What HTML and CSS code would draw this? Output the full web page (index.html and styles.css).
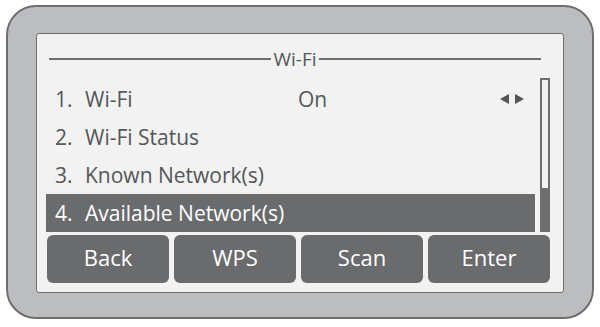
FILE: index.html
```html
<!DOCTYPE html>
<html lang="en">
<head>
    <meta charset="UTF-8">
    <title>Wi-Fi Menu</title>
    <link rel="stylesheet" href="styles.css">
</head>
<body>
    <div class="device">
        <div class="screen">
            <div class="title"><span>Wi-Fi</span></div>

            <div class="menu-body">
                <ul class="menu">
                    <li>
                        <span class="num">1.</span>
                        <span class="label">Wi-Fi</span>
                        <span class="value">On</span>
                        <svg class="arrows" width="24" height="12" viewBox="0 0 24 12">
                            <polygon points="0,6 9,1 9,11" />
                            <polygon points="15,1 24,6 15,11" />
                        </svg>
                    </li>
                    <li><span class="num">2.</span><span class="label">Wi-Fi Status</span></li>
                    <li><span class="num">3.</span><span class="label">Known Network(s)</span></li>
                    <li class="selected"><span class="num">4.</span><span class="label">Available Network(s)</span></li>
                </ul>
                <div class="scrollbar"><div class="scroll-fill"></div></div>
            </div>

            <div class="buttons">
                <button>Back</button>
                <button>WPS</button>
                <button>Scan</button>
                <button>Enter</button>
            </div>
        </div>
    </div>
</body>
</html>
```

FILE: styles.css
```css
body {
    margin: 0;
    background: #ffffff;
    font-family: "Open Sans", "Noto Sans", sans-serif;
}
.device {
    box-sizing: border-box;
    width: 588px;
    height: 314px;
    margin: 5px 0 0 6px;
    padding: 26px 0 0 28px;
    background: #bcbdbf;
    border: 2px solid #6d6e70;
    border-radius: 30px;
}
.screen {
    box-sizing: border-box;
    width: 528px;
    height: 260px;
    background: #f2f2f2;
    border: 1px solid #6d6e70;
    border-radius: 3px;
    display: flex;
    flex-direction: column;
}
.title {
    display: flex;
    align-items: center;
    height: 20px;
    margin: 15px 0 9px 12px;
    width: 492px;
    color: #555658;
    font-size: 19px;
}
.title::before, .title::after {
    content: "";
    flex: 1;
    height: 2px;
    background: #6d6e70;
}
.title span {
    padding: 0 2px;
}
.menu-body {
    display: flex;
    gap: 5px;
    margin-left: 9px;
    height: 154px;
}
.menu {
    list-style: none;
    margin: 0;
    padding: 2px 0 0 0;
    width: 489px;
}
.menu li {
    display: flex;
    align-items: center;
    height: 38px;
    padding-left: 9px;
    color: #555658;
    font-size: 21px;
}
.menu li.selected {
    background: #6a6b6d;
    color: #ffffff;
}
.num {
    width: 30px;
}
.label {
    width: 213px;
}
.value {
    width: 202px;
}
.arrows {
    fill: #555658;
}
.scrollbar {
    box-sizing: border-box;
    width: 10px;
    height: 154px;
    border: 2px solid #6d6e70;
    border-bottom: none;
    display: flex;
    flex-direction: column;
    justify-content: flex-end;
}
.scroll-fill {
    height: 44px;
    margin: 0 -2px;
    background: #6d6e70;
}
.buttons {
    display: flex;
    gap: 5px;
    margin: 3px 0 0 10px;
    width: 503px;
}
.buttons button {
    flex: 1;
    height: 48px;
    border: none;
    border-radius: 6px;
    background: #6a6b6d;
    color: #ffffff;
    font-family: "Open Sans", "Noto Sans", sans-serif;
    font-size: 22px;
    padding: 0 0 4px 0;
}
```
